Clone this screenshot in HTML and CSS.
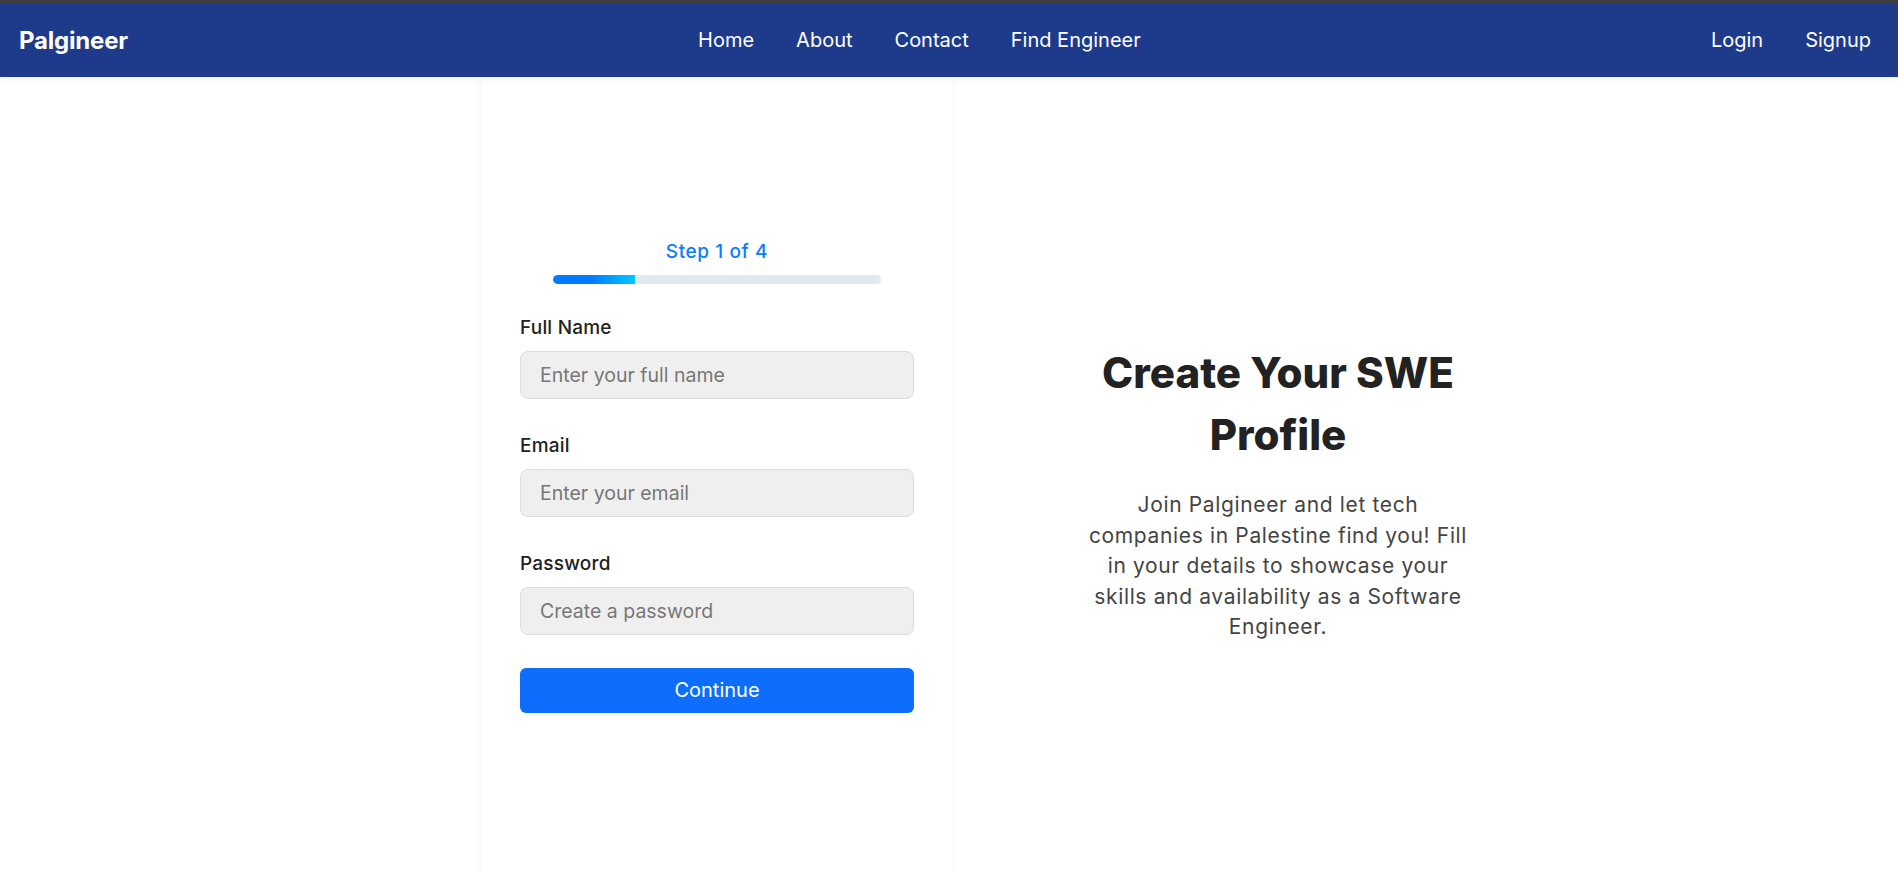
FILE: index.html
```html
<!DOCTYPE html>
<html lang="en">
<head>
<meta charset="utf-8">
<title>Palgineer - Create Your SWE Profile</title>
<link rel="stylesheet" href="styles.css">
</head>
<body>
<header class="navbar">
  <a class="brand" href="#">Palgineer</a>
  <nav class="nav-links">
    <a href="#">Home</a>
    <a href="#">About</a>
    <a href="#">Contact</a>
    <a href="#">Find Engineer</a>
  </nav>
  <div class="auth-links">
    <a href="#">Login</a>
    <a href="#">Signup</a>
  </div>
</header>
<main class="page">
  <div class="spacer"></div>
  <section class="form-panel">
    <div class="form-inner">
      <div class="step-label">Step 1 of 4</div>
      <div class="progress"><div class="progress-fill" style="width:25%"></div></div>
      <form class="signup-form">
        <div class="field">
          <label>Full Name</label>
          <input type="text" placeholder="Enter your full name">
        </div>
        <div class="field">
          <label>Email</label>
          <input type="email" placeholder="Enter your email">
        </div>
        <div class="field">
          <label>Password</label>
          <input type="password" placeholder="Create a password">
        </div>
        <button type="button" class="btn-continue">Continue</button>
      </form>
    </div>
  </section>
  <section class="info-panel">
    <div class="info-inner">
      <h1>Create Your SWE Profile</h1>
      <p>Join Palgineer and let tech<br>companies in Palestine find you! Fill<br>in your details to showcase your<br>skills and availability as a Software<br>Engineer.</p>
    </div>
  </section>
</main>
</body>
</html>
```
FILE: styles.css
```css
* { box-sizing: border-box; }
html, body { margin: 0; padding: 0; }
body {
  font-family: "Inter", "Noto Sans", sans-serif;
  background: #ffffff;
  color: #222;
  height: 872px;
  overflow: hidden;
}
a { text-decoration: none; color: inherit; }

.navbar {
  height: 77px;
  border-top: 3px solid #3e3e3e;
  background: #1e3a8a;
  display: flex;
  align-items: center;
  justify-content: space-between;
  padding: 0 27px 0 19px;
  box-shadow: 0 2px 8px rgba(0,0,0,0.06);
  position: relative;
  z-index: 2;
}
.brand {
  color: #fff;
  font-weight: 700;
  font-size: 24px;
  letter-spacing: -0.2px;
}
.nav-links, .auth-links {
  display: flex;
  gap: 42px;
}
.nav-links a, .auth-links a {
  color: #fff;
  font-size: 20px;
  font-weight: 400;
}
.nav-links { margin-left: 0; }

.page {
  display: grid;
  grid-template-columns: 482px 470px 652px 1fr;
  height: 795px;
}
.form-panel {
  background: #fff;
  box-shadow: 0 0 8px rgba(0,0,0,0.05);
  display: flex;
  align-items: center;
  justify-content: center;
}
.form-inner {
  width: 394px;
  display: flex;
  flex-direction: column;
  align-items: center;
}
.step-label {
  color: #0b7bff;
  font-size: 19px;
  line-height: 27px;
  font-weight: 500;
  letter-spacing: 0.6px;
  margin-top: 1px;
}
.progress {
  width: 328px;
  height: 9px;
  margin-top: 10px;
  background: #e2e8f0;
  border-radius: 5px;
  overflow: hidden;
}
.progress-fill {
  height: 100%;
  background: linear-gradient(90deg, #007bff 45%, #00c8ff 100%);
  border-radius: 5px 0 0 5px;
}
.signup-form {
  width: 100%;
  margin-top: 30px;
}
.field {
  display: flex;
  flex-direction: column;
  margin-bottom: 33px;
}
.field label {
  font-size: 19px;
  line-height: 27px;
  color: #222;
  font-weight: 500;
  letter-spacing: 0.2px;
  margin-bottom: 10px;
}
.field input {
  height: 48px;
  border: 1px solid #dcdcdc;
  background: #efefef;
  border-radius: 8px;
  padding: 0 19px;
  font-family: inherit;
  font-size: 19.5px;
  color: #333;
}
.field input::placeholder { color: #777; }
.btn-continue {
  width: 100%;
  height: 45px;
  border: none;
  border-radius: 6px;
  background: #0d6efd;
  color: #fff;
  font-family: inherit;
  font-size: 20px;
}

.info-panel {
  display: flex;
  align-items: center;
  justify-content: center;
  padding-top: 36px;
}
.info-inner {
  width: 420px;
  text-align: center;
}
.info-inner h1 {
  margin: 0 auto;
  width: 372px;
  font-size: 42px;
  line-height: 62px;
  font-weight: 800;
  color: #222;
}
.info-inner p {
  margin: 24px 0 0;
  font-size: 21px;
  line-height: 30.6px;
  letter-spacing: 0.65px;
  color: #444;
}
```
